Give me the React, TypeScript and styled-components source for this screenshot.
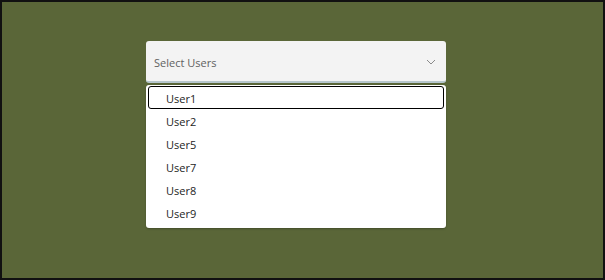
import React from "react";
import styled, { createGlobalStyle } from "styled-components";

const Global = createGlobalStyle`
  html, body { margin: 0; padding: 0; }
  body { font-family: "Open Sans", "Noto Sans", sans-serif; }
`;

const Frame = styled.div`
  box-sizing: border-box;
  width: 605px;
  height: 280px;
  border: 2px solid #111;
  background: #5a6638;
  display: flex;
  justify-content: flex-start;
  padding: 39px 0 0 144px;
`;

const Dropdown = styled.div`
  width: 300px;
  display: flex;
  flex-direction: column;
  gap: 2px;
`;

const Trigger = styled.div`
  box-sizing: border-box;
  height: 42px;
  background: #f3f3f3;
  border-radius: 3px;
  border-bottom: 2px solid #b6c6cc;
  display: flex;
  align-items: center;
  justify-content: space-between;
  padding: 2px 10px 0 8px;
  font-size: 11px;
  color: #616161;
`;

const Menu = styled.div`
  box-sizing: border-box;
  background: #fff;
  border-radius: 3px;
  padding: 1px 2px 4px;
  display: flex;
  flex-direction: column;
  box-shadow: 0 1px 2px rgba(0, 0, 0, 0.25);
`;

const Item = styled.div<{ $focused?: boolean }>`
  box-sizing: border-box;
  height: 23px;
  display: flex;
  align-items: center;
  padding: 2px 0 0 17px;
  font-size: 11px;
  color: #242424;
  border-radius: 3px;
  border: 1px solid ${(p) => (p.$focused ? "#000" : "transparent")};
`;

const users = ["User1", "User2", "User5", "User7", "User8", "User9"];

export default function App() {
  return (
    <>
      <Global />
      <Frame>
        <Dropdown>
          <Trigger>
            <span>Select Users</span>
            <svg width="10" height="6" viewBox="0 0 10 6" fill="none">
              <path d="M1 1l4 4 4-4" stroke="#8a8a8a" strokeWidth="1" />
            </svg>
          </Trigger>
          <Menu>
            {users.map((u, i) => (
              <Item key={u} $focused={i === 0}>
                {u}
              </Item>
            ))}
          </Menu>
        </Dropdown>
      </Frame>
    </>
  );
}
